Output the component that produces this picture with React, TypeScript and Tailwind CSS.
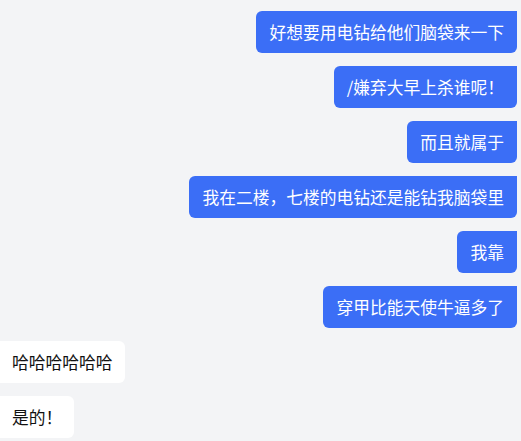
import React from "react";

const msgs: { me: boolean; text: string }[] = [
  { me: true, text: "好想要用电钻给他们脑袋来一下" },
  { me: true, text: "/嫌弃大早上杀谁呢！" },
  { me: true, text: "而且就属于" },
  { me: true, text: "我在二楼，七楼的电钻还是能钻我脑袋里" },
  { me: true, text: "我靠" },
  { me: true, text: "穿甲比能天使牛逼多了" },
  { me: false, text: "哈哈哈哈哈哈" },
  { me: false, text: "是的！" },
];

export default function App() {
  return (
    <div
      className="w-[521px] h-[441px] overflow-hidden bg-[#f3f4f6] flex flex-col gap-[13px] pt-[11px] pr-[4px]"
      style={{ fontFamily: '"Noto Sans CJK SC", sans-serif' }}
    >
      {msgs.map((m, i) => (
        <div key={i} className={m.me ? "flex justify-end" : "flex justify-start"}>
          <div
            className={
              m.me
                ? "bg-[#3b6ef6] text-white text-[16.75px] leading-[24px] px-[13px] py-[9px] rounded-[6px] rounded-tr-none whitespace-nowrap"
                : "bg-white text-[#111] text-[16.75px] leading-[24px] pl-[12px] pr-[12px] py-[9px] rounded-r-[6px] whitespace-nowrap"
            }
          >
            {m.text}
          </div>
        </div>
      ))}
    </div>
  );
}
